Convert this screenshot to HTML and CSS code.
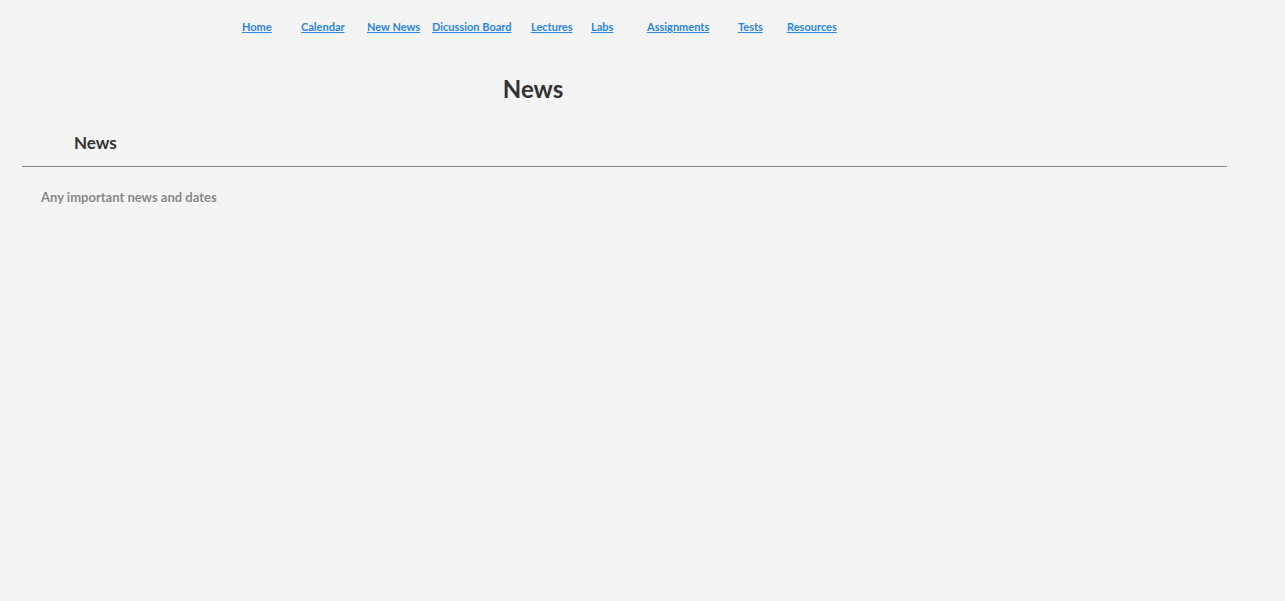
FILE: index.html
```html
<!DOCTYPE html>
<html>
<head>
<meta charset="utf-8">
<link rel="stylesheet" href="styles.css">
</head>
<body>
<nav class="nav">
  <a href="#">Home</a>
  <a href="#">Calendar</a>
  <a href="#">New News</a>
  <a href="#">Dicussion Board</a>
  <a href="#">Lectures</a>
  <a href="#">Labs</a>
  <a href="#">Assignments</a>
  <a href="#">Tests</a>
  <a href="#">Resources</a>
</nav>
<h1 class="title">News</h1>
<section class="section">
  <h2 class="section-title">News</h2>
  <hr class="rule">
  <p class="note">Any important news and dates</p>
</section>
</body>
</html>
```
FILE: styles.css
```css
html, body {
  margin: 0;
  padding: 0;
  background: #f4f4f4;
  font-family: Lato, "Open Sans", sans-serif;
  color: #333;
}
.nav {
  display: grid;
  grid-template-columns: 59px 66px 65px 99px 60px 56px 91px 49px auto;
  padding: 20px 0 0 242px;
  height: 16px;
}
.nav a {
  font-size: 11px;
  font-weight: 700;
  color: #2a86e0;
  text-decoration: underline;
  white-space: nowrap;
  line-height: 14px;
}
.title {
  width: 1066px;
  margin: 39px 0 0 0;
  text-align: center;
  font-size: 24px;
  font-weight: 700;
  line-height: 28px;
}
.section {
  padding: 0 58px 0 22px;
}
.section-title {
  margin: 30px 0 0 52px;
  font-size: 17px;
  font-weight: 700;
  line-height: 20px;
}
.rule {
  margin: 13px 0 0 0;
  border: 0;
  border-top: 1px solid #888;
  height: 0;
}
.note {
  margin: 22px 0 0 19px;
  font-size: 13px;
  font-weight: 700;
  color: #888;
  line-height: 16px;
}
```
